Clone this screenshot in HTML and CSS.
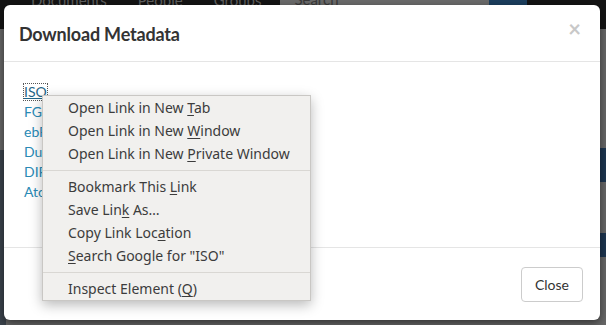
FILE: index.html
```html
<!DOCTYPE html>
<html>
<head>
<meta charset="utf-8">
<link rel="stylesheet" href="styles.css">
</head>
<body>
<div class="page">
  <nav class="navbar">
    <span class="nav-item">Documents</span>
    <span class="nav-item">People</span>
    <span class="nav-item">Groups</span>
    <div class="search">
      <span class="search-input">Search</span>
      <span class="search-btn"></span>
    </div>
  </nav>
  <main class="content">
    <div class="side-left"></div>
    <div class="side-right">
      <div class="blue-block"></div>
      <div class="blue-block b2"></div>
    </div>
  </main>
</div>

<div class="modal">
  <header class="modal-header">
    <h4 class="modal-title">Download Metadata</h4>
    <span class="close-x">×</span>
  </header>
  <section class="modal-body">
    <a class="link focused">ISO</a>
    <a class="link">FGDC</a>
    <a class="link">ebRIM</a>
    <a class="link">Dublin Core</a>
    <a class="link">DIF</a>
    <a class="link">Atom</a>
  </section>
  <footer class="modal-footer">
    <button class="btn">Close</button>
  </footer>
</div>

<div class="ctx-menu">
  <div class="ctx-item">Open Link in New <u>T</u>ab</div>
  <div class="ctx-item">Open Link in New <u>W</u>indow</div>
  <div class="ctx-item">Open Link in New <u>P</u>rivate Window</div>
  <div class="ctx-sep"></div>
  <div class="ctx-item">Bookmark This <u>L</u>ink</div>
  <div class="ctx-item">Save Lin<u>k</u> As…</div>
  <div class="ctx-item">Copy Link Loc<u>a</u>tion</div>
  <div class="ctx-item"><u>S</u>earch Google for "ISO"</div>
  <div class="ctx-sep"></div>
  <div class="ctx-item">Inspect Element (<u>Q</u>)</div>
</div>
</body>
</html>
```

FILE: styles.css
```css
* { box-sizing: border-box; }

html, body {
  margin: 0;
  padding: 0;
  width: 606px;
  height: 325px;
  overflow: hidden;
}

body {
  background: #5f5f5f;
  font-family: Lato, "Open Sans", sans-serif;
  position: relative;
}

.page {
  display: flex;
  flex-direction: column;
  height: 325px;
}

.navbar {
  height: 29px;
  background: #141414;
  display: flex;
  align-items: flex-start;
  padding-left: 31px;
  gap: 31px;
  flex-shrink: 0;
}

.nav-item {
  color: #5f5f5f;
  font-size: 15px;
  line-height: 20px;
  margin-top: -10px;
}

.search {
  display: flex;
  height: 26px;
  margin-top: -12px;
  margin-left: -12px;
}

.search-input {
  width: 209px;
  background: #6b6b6b;
  color: #3a3a3a;
  font-size: 15px;
  padding-left: 14px;
  line-height: 22px;
}

.search-btn {
  width: 38px;
  background: #1c3f5e;
}

.content {
  flex: 1;
  display: flex;
  justify-content: space-between;
  background: #676767;
}

.side-left {
  width: 6px;
  margin-top: 121px;
  background: #3b434c;
}

.side-right {
  width: 8px;
  display: flex;
  flex-direction: column;
  padding-top: 119px;
  gap: 51px;
}

.blue-block {
  height: 34px;
  background: #1d3550;
}

.blue-block.b2 {
  height: 24px;
}

/* Modal */
.modal {
  position: absolute;
  left: 4px;
  top: 5px;
  width: 596px;
  height: 315px;
  background: #fff;
  border-radius: 6px;
  display: flex;
  flex-direction: column;
  box-shadow: 0 3px 9px rgba(0, 0, 0, 0.5);
}

.modal-header {
  height: 57px;
  border-bottom: 1px solid #e5e5e5;
  display: flex;
  align-items: center;
  justify-content: space-between;
  padding: 0 15px 0 15px;
  flex-shrink: 0;
}

.modal-title {
  margin: 0;
  font-size: 18px;
  font-weight: 700;
  color: #333;
  letter-spacing: -0.2px;
  padding-top: 2px;
}

.close-x {
  font-size: 22px;
  font-weight: 700;
  color: #c8c8c8;
  line-height: 1;
  margin-top: -8px;
  margin-right: 4px;
}

.modal-body {
  flex: 1;
  display: flex;
  flex-direction: column;
  align-items: flex-start;
  padding: 20px 20px 0 20px;
}

.link {
  color: #2a8ab5;
  font-size: 14px;
  line-height: 20px;
  text-decoration: none;
  cursor: pointer;
}

.link.focused {
  color: #1f6587;
  text-decoration: underline;
  outline: 1px dotted #555;
  line-height: 16px;
  margin-bottom: 2px;
  margin-top: 2px;
}

.modal-footer {
  height: 73px;
  border-top: 1px solid #e5e5e5;
  display: flex;
  justify-content: flex-end;
  align-items: flex-start;
  padding: 19px 17px 0 0;
  flex-shrink: 0;
}

.btn {
  font-family: Lato, "Open Sans", sans-serif;
  font-size: 14px;
  color: #333;
  background: #fff;
  border: 1px solid #ccc;
  border-radius: 4px;
  width: 62px;
  height: 35px;
  padding: 0;
}

/* Context menu */
.ctx-menu {
  position: absolute;
  left: 42px;
  top: 95px;
  width: 269px;
  height: 206px;
  background: #f1f0ee;
  border: 1px solid #c9c7c4;
  box-shadow: 0 4px 12px rgba(0, 0, 0, 0.28);
  font-family: "Noto Sans", "DejaVu Sans", sans-serif;
  font-size: 14px;
  color: #3c3c3c;
  display: flex;
  flex-direction: column;
}

.ctx-item {
  height: 23px;
  line-height: 23px;
  padding-left: 25px;
  white-space: nowrap;
}

.ctx-item u {
  text-decoration-thickness: 1px;
  text-underline-offset: 2px;
}

.ctx-sep {
  height: 10px;
  display: flex;
  align-items: center;
}

.ctx-sep::before {
  content: "";
  display: block;
  width: 100%;
  height: 1px;
  background: #d9d7d3;
}
```
